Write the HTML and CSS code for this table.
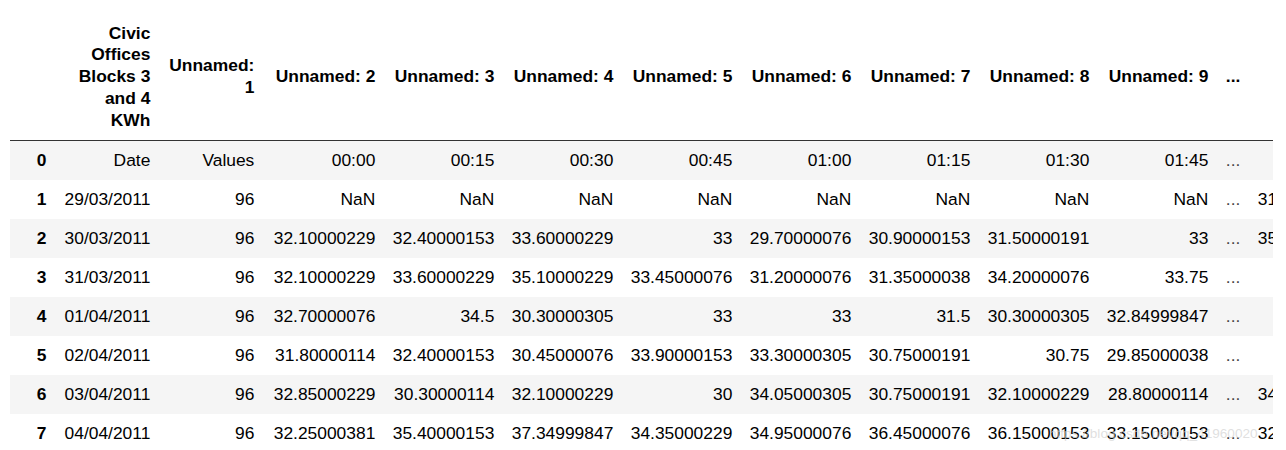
FILE: index.html
```html
<!DOCTYPE html>
<html lang="en">
<head>
<meta charset="utf-8">
<title>DataFrame</title>
<link rel="stylesheet" href="styles.css">
</head>
<body>
<div class="page">
  <div class="frame">
    <table class="df">
      <colgroup>
        <col class="c-idx">
        <col class="c-text">
        <col class="c-text">
        <col class="c-first">
        <col class="c-num">
        <col class="c-num">
        <col class="c-num">
        <col class="c-num">
        <col class="c-num">
        <col class="c-num">
        <col class="c-num">
        <col class="c-ell">
        <col class="c-num">
      </colgroup>
      <thead>
        <tr>
          <th></th>
          <th>Civic Offices Blocks 3 and 4 KWh</th>
          <th>Unnamed: 1</th>
          <th>Unnamed: 2</th>
          <th>Unnamed: 3</th>
          <th>Unnamed: 4</th>
          <th>Unnamed: 5</th>
          <th>Unnamed: 6</th>
          <th>Unnamed: 7</th>
          <th>Unnamed: 8</th>
          <th>Unnamed: 9</th>
          <th>...</th>
          <th>Unnamed: 88</th>
        </tr>
      </thead>
      <tbody>
        <tr><th>0</th><td>Date</td><td>Values</td><td>00:00</td><td>00:15</td><td>00:30</td><td>00:45</td><td>01:00</td><td>01:15</td><td>01:30</td><td>01:45</td><td class="ell">...</td><td>21:30</td></tr>
        <tr><th>1</th><td>29/03/2011</td><td>96</td><td>NaN</td><td>NaN</td><td>NaN</td><td>NaN</td><td>NaN</td><td>NaN</td><td>NaN</td><td>NaN</td><td class="ell">...</td><td>31.20000076</td></tr>
        <tr><th>2</th><td>30/03/2011</td><td>96</td><td>32.10000229</td><td>32.40000153</td><td>33.60000229</td><td>33</td><td>29.70000076</td><td>30.90000153</td><td>31.50000191</td><td>33</td><td class="ell">...</td><td>35.10000229</td></tr>
        <tr><th>3</th><td>31/03/2011</td><td>96</td><td>32.10000229</td><td>33.60000229</td><td>35.10000229</td><td>33.45000076</td><td>31.20000076</td><td>31.35000038</td><td>34.20000076</td><td>33.75</td><td class="ell">...</td><td>33</td></tr>
        <tr><th>4</th><td>01/04/2011</td><td>96</td><td>32.70000076</td><td>34.5</td><td>30.30000305</td><td>33</td><td>33</td><td>31.5</td><td>30.30000305</td><td>32.84999847</td><td class="ell">...</td><td>32.5</td></tr>
        <tr><th>5</th><td>02/04/2011</td><td>96</td><td>31.80000114</td><td>32.40000153</td><td>30.45000076</td><td>33.90000153</td><td>33.30000305</td><td>30.75000191</td><td>30.75</td><td>29.85000038</td><td class="ell">...</td><td>30</td></tr>
        <tr><th>6</th><td>03/04/2011</td><td>96</td><td>32.85000229</td><td>30.30000114</td><td>32.10000229</td><td>30</td><td>34.05000305</td><td>30.75000191</td><td>32.10000229</td><td>28.80000114</td><td class="ell">...</td><td>34.35000229</td></tr>
        <tr><th>7</th><td>04/04/2011</td><td>96</td><td>32.25000381</td><td>35.40000153</td><td>37.34999847</td><td>34.35000229</td><td>34.95000076</td><td>36.45000076</td><td>36.15000153</td><td>33.15000153</td><td class="ell">...</td><td>32.84999847</td></tr>
      </tbody>
    </table>
  </div>
  <div class="watermark">https://blog.csdn.net/qq_41960020</div>
</div>
</body>
</html>
```
FILE: styles.css
```css
html, body {
  margin: 0;
  padding: 0;
  background: #ffffff;
}

body {
  font-family: "Liberation Sans", Arial, Helvetica, sans-serif;
  color: #000000;
}

.page {
  position: relative;
  padding: 14px 0 0 10px;
  height: 436px;
  overflow: hidden;
}

.frame {
  width: 1263px;
  overflow: hidden;
}

.df {
  table-layout: fixed;
  width: 1358px;
  border-collapse: collapse;
  border-spacing: 0;
  font-size: 17.4px;
  line-height: 21.7px;
}

.c-idx { width: 45px; }
.c-text { width: 104px; }
.c-first { width: 121px; }
.c-num { width: 119px; }
.c-ell { width: 32px; }

.df th,
.df td {
  padding: 8.7px;
  text-align: right;
  vertical-align: middle;
  white-space: nowrap;
  overflow: hidden;
}

.df thead th {
  font-weight: bold;
  white-space: normal;
  border-bottom: 1px solid #333333;
}

.df tbody th {
  font-weight: bold;
}

.df td.ell {
  color: #444444;
}

.df tbody tr:nth-child(odd) {
  background: #f5f5f5;
}

.watermark {
  position: absolute;
  left: 1049px;
  top: 426px;
  font-size: 13.6px;
  line-height: 16px;
  color: rgba(210, 210, 210, 0.7);
  white-space: nowrap;
  pointer-events: none;
}
```
